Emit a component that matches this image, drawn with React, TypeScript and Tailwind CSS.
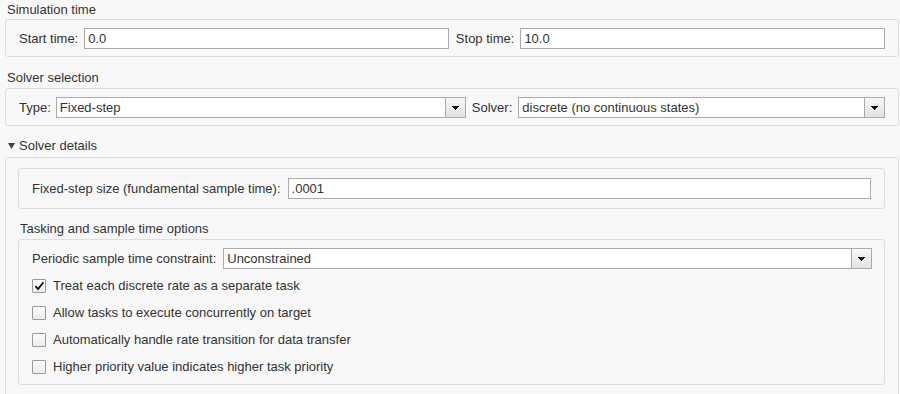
function Caret() {
  return (
    <svg width="7" height="4" viewBox="0 0 7 4" shapeRendering="crispEdges">
      <rect x="0" y="0" width="7" height="1" fill="#111" />
      <rect x="1" y="1" width="5" height="1" fill="#111" />
      <rect x="2" y="2" width="3" height="1" fill="#111" />
      <rect x="3" y="3" width="1" height="1" fill="#111" />
    </svg>
  );
}

function TextBox({ value, className = "" }: { value: string; className?: string }) {
  return (
    <div className={`h-[21px] border border-[#ababab] bg-white pl-[3px] flex items-center whitespace-nowrap ${className}`}>
      {value}
    </div>
  );
}

function Combo({ value, className = "" }: { value: string; className?: string }) {
  return (
    <div className={`h-[21px] flex border border-[#ababab] bg-white ${className}`}>
      <div className="flex-1 pl-[3px] flex items-center whitespace-nowrap">{value}</div>
      <div className="w-[20px] border-l border-[#ababab] bg-linear-to-b from-[#f8f8f8] to-[#e2e2e2] flex items-center justify-center">
        <Caret />
      </div>
    </div>
  );
}

function Check({ checked, label }: { checked?: boolean; label: string }) {
  return (
    <div className="h-[27px] flex items-center gap-[7px]">
      <div className="w-[14px] h-[14px] border border-[#9a9a9a] rounded-[1px] bg-linear-to-b from-[#fdfdfd] to-[#ebebeb] flex items-center justify-center">
        {checked && (
          <svg width="11" height="10" viewBox="0 0 11 10">
            <path d="M1.5 5.2 L4 8 L9.5 1.2" fill="none" stroke="#111" strokeWidth="1.8" />
          </svg>
        )}
      </div>
      <span>{label}</span>
    </div>
  );
}

export default function App() {
  return (
    <div className="w-[900px] h-[394px] overflow-hidden bg-[#f8f8f8] text-[13px] leading-[16px] text-[#333] font-['Liberation_Sans',Arial,sans-serif]">
      <div className="pl-[7px] pt-[2px] h-[17px]">Simulation time</div>
      <div className="mt-[2px] ml-[5px] w-[894px] h-[38px] rounded-[3px] border border-[#dedede] flex items-start pt-[8px] px-[13px]">
        <div className="flex items-center h-[21px]">Start time:</div>
        <TextBox value="0.0" className="flex-1 ml-[6px]" />
        <div className="flex items-center h-[21px] ml-[7px]">Stop time:</div>
        <TextBox value="10.0" className="flex-1 ml-[6px]" />
      </div>

      <div className="pl-[7px] mt-[12px] pt-[1px] h-[16px]">Solver selection</div>
      <div className="mt-[3px] ml-[5px] w-[894px] h-[38px] rounded-[3px] border border-[#dedede] flex items-start pt-[8px] px-[13px]">
        <div className="flex items-center h-[21px]">Type:</div>
        <Combo value="Fixed-step" className="w-[410px] ml-[5px]" />
        <div className="flex items-center h-[21px] ml-[6px]">Solver:</div>
        <Combo value="discrete (no continuous states)" className="flex-1 ml-[6px]" />
      </div>

      <div className="mt-[12px] h-[16px] flex items-center pl-[8px] gap-[4px]">
        <svg width="7" height="6" viewBox="0 0 7 6">
          <path d="M0 0 H7 L3.5 6 Z" fill="#444" />
        </svg>
        <span>Solver details</span>
      </div>
      <div className="mt-[3px] ml-[5px] w-[894px] h-[260px] rounded-t-[3px] border border-[#dedede] pt-[10px] pl-[12px] pr-[13px]">
        <div className="h-[41px] rounded-[3px] border border-[#dedede] flex items-start pt-[9px] pl-[13px] pr-[13px]">
          <div className="flex items-center h-[21px]">Fixed-step size (fundamental sample time):</div>
          <TextBox value=".0001" className="flex-1 ml-[7px]" />
        </div>

        <div className="mt-[12px] h-[16px] ml-[2px]">Tasking and sample time options</div>
        <div className="mt-[2px] h-[146px] rounded-[3px] border border-[#dedede] pt-[8px] pl-[13px] pr-[12px]">
          <div className="flex items-start">
            <div className="flex items-center h-[21px]">Periodic sample time constraint:</div>
            <Combo value="Unconstrained" className="flex-1 ml-[7px]" />
          </div>
          <div className="mt-[3px]">
            <Check checked label="Treat each discrete rate as a separate task" />
            <Check label="Allow tasks to execute concurrently on target" />
            <Check label="Automatically handle rate transition for data transfer" />
            <Check label="Higher priority value indicates higher task priority" />
          </div>
        </div>
      </div>
    </div>
  );
}
